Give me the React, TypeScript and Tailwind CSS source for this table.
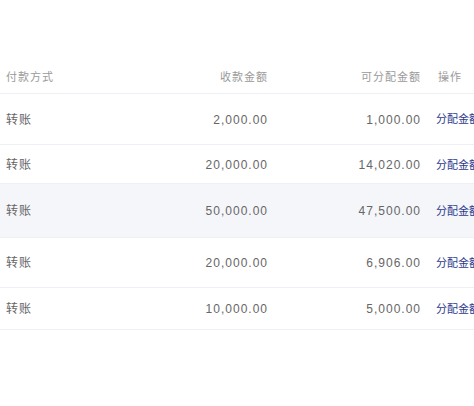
import React from "react";

const rows = [
  { m: "转账", a: "2,000.00", b: "1,000.00", h: "h-[51px]", bg: "" },
  { m: "转账", a: "20,000.00", b: "14,020.00", h: "h-[39px] pt-[2px]", bg: "" },
  { m: "转账", a: "50,000.00", b: "47,500.00", h: "h-[54px]", bg: "bg-[#f5f6fa]" },
  { m: "转账", a: "20,000.00", b: "6,906.00", h: "h-[50px]", bg: "" },
  { m: "转账", a: "10,000.00", b: "5,000.00", h: "h-[42px]", bg: "" },
];

export default function App() {
  return (
    <div
      className="w-[474px] h-[406px] bg-white overflow-hidden pt-[60px]"
      style={{ fontFamily: '"Liberation Sans", "Noto Sans CJK SC", sans-serif' }}
    >
      <div className="w-[520px]">
        <div className="flex items-center h-[34px] pt-[1px] border-b border-[#eef0f5] text-[11px] tracking-[1px] text-[#9a9a9a]">
          <div className="w-[150px] pl-[6px]">付款方式</div>
          <div className="w-[118px] text-right">收款金额</div>
          <div className="w-[153px] text-right">可分配金额</div>
          <div className="pl-[17px]">操作</div>
        </div>
        {rows.map((r, i) => (
          <div
            key={i}
            className={`flex items-center border-b border-[#eef0f5] text-[12px] tracking-[1px] text-[#666666] pt-[1px] ${r.h} ${r.bg}`}
          >
            <div className="w-[150px] pl-[6px]">{r.m}</div>
            <div className="w-[118px] text-right">{r.a}</div>
            <div className="w-[153px] text-right">{r.b}</div>
            <div className="pl-[15px] whitespace-nowrap text-[11px] tracking-[0px] text-[#2b3a8c]">分配金额</div>
          </div>
        ))}
      </div>
    </div>
  );
}
